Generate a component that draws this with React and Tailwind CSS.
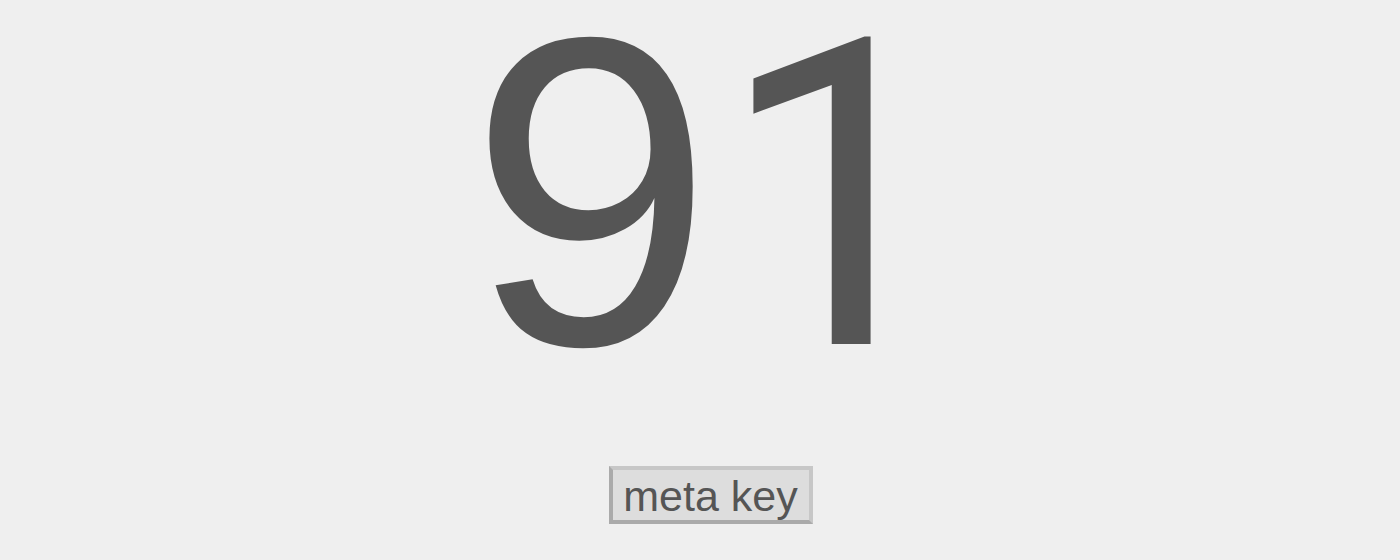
export default function App() {
  return (
    <div className="min-h-[560px] w-full bg-[#efefef] text-[#555555] flex flex-col items-center" style={{ fontFamily: '"Liberation Sans", Arial, sans-serif' }}>
      <div className="text-[430px] leading-[390px] h-[390px] pl-[28px]">
        <span className="text-[440px] leading-[383px]">9</span>
        <span className="ml-[4px] font-['Roboto',sans-serif]">1</span>
      </div>
      <button className="mt-[76px] ml-[21px] w-[204px] h-[58px] bg-[#dddddd] border-4 border-t-[#c7c7c7] border-r-[#c7c7c7] border-b-[#aaaaaa] border-l-[#aaaaaa] text-[43px] leading-[48px] pt-[2px] text-[#555555]">
        meta key
      </button>
    </div>
  )
}
